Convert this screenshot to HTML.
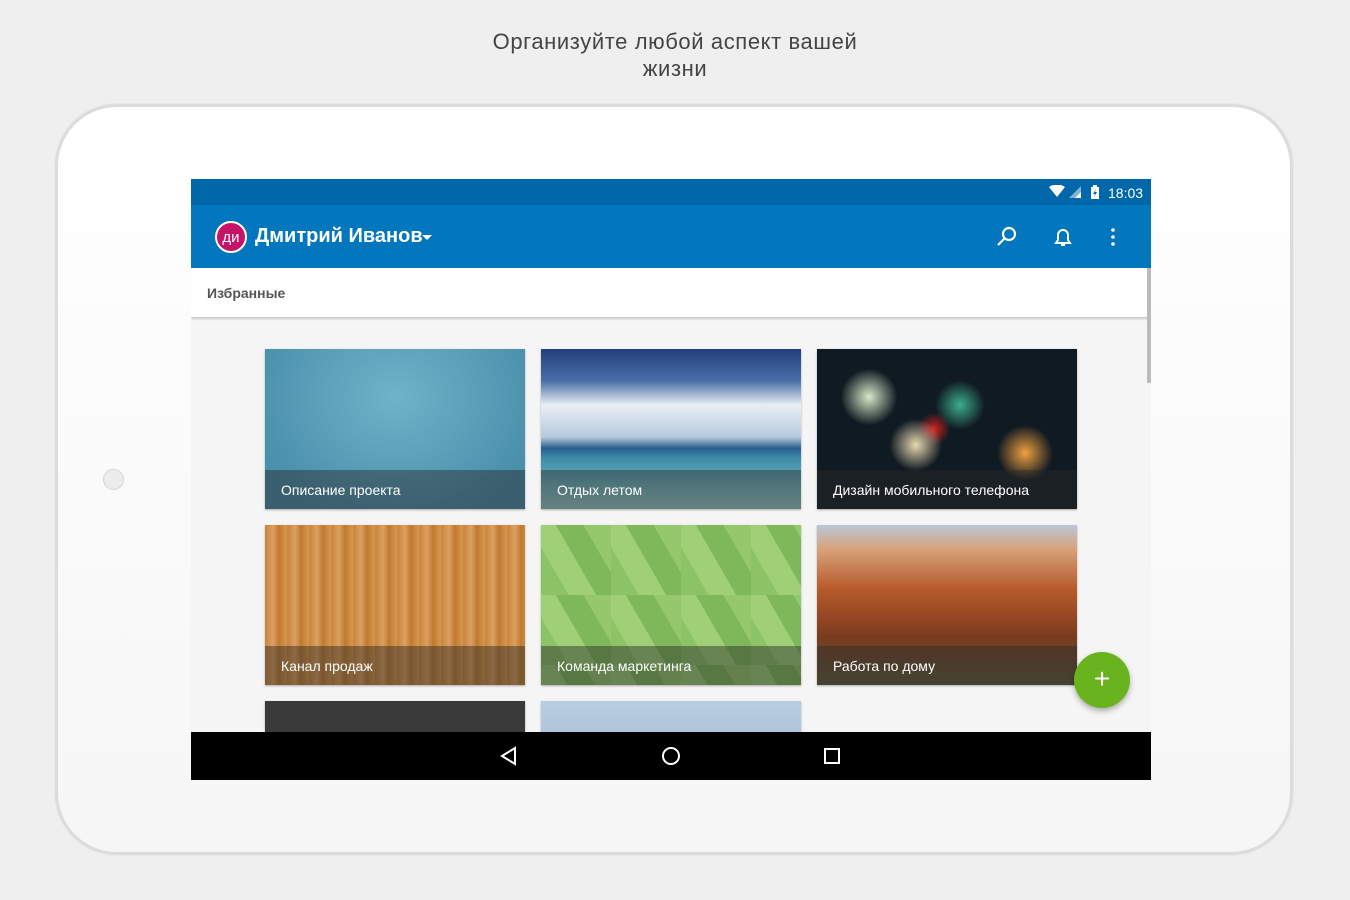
<!DOCTYPE html>
<html><head><meta charset="utf-8"><style>
*{margin:0;padding:0;box-sizing:border-box}
body{width:1350px;height:900px;background:#efefef;font-family:"Liberation Sans",Roboto,sans-serif;position:relative;overflow:hidden}
.title{position:absolute;top:28px;left:0;width:1350px;text-align:center;font-size:22px;line-height:27px;color:#444;letter-spacing:0.6px}
.tab{position:absolute;left:55px;top:104px;width:1238px;height:751px;border-radius:62px;background:linear-gradient(#fff,#f6f6f6);border:3px solid #dcdcdc;box-shadow:0 0 0 1px #e8e8e8}
.cam{position:absolute;left:103px;top:469px;width:21px;height:21px;border-radius:50%;background:#ececec;border:1px solid #d4d4d4}
.scr{position:absolute;left:191px;top:179px;width:960px;height:601px;background:#f5f5f5;overflow:hidden}
.sb{position:absolute;left:0;top:0;width:960px;height:26px;background:#0067a8;color:#fff;font-size:14px}
.tb{position:absolute;left:0;top:26px;width:960px;height:63px;background:#0277be}
.fav{position:absolute;left:0;top:89px;width:960px;height:49px;background:#fff;box-shadow:0 2px 2px rgba(0,0,0,.18);font-size:14px;font-weight:bold;color:#555;padding:17px 16px}
.card{position:absolute;width:260px;height:160px;overflow:hidden;box-shadow:0 1px 2px rgba(0,0,0,.3)}
.lab{position:absolute;left:0;bottom:0;width:100%;height:39px;background:rgba(40,40,40,.45);color:#fff;font-size:14px;padding:12px 16px}
.nav{position:absolute;left:0;top:553px;width:960px;height:48px;background:#000}
</style></head><body>
<div class="title">Организуйте любой аспект вашей<br>жизни</div>
<div class="tab"></div>
<div class="cam"></div>
<div class="scr">
 <div class="sb">
  <svg style="position:absolute;left:858px;top:6px" width="36" height="15"><path d="M0 2 Q8 -3 16 2 L8 12Z" fill="#fff"/><path d="M20 13 L32 1 V13Z" fill="#fff" opacity=".5"/><path d="M26 13 L32 7 V13Z" fill="#fff"/></svg>
  <svg style="position:absolute;left:899px;top:6px" width="10" height="15"><rect x="1" y="2" width="8" height="12" fill="#fff"/><rect x="3" y="0" width="4" height="2" fill="#fff"/><path d="M6 4 L3 9 H5 L4 12 L7 7 H5Z" fill="#0067a8"/></svg>
  <span style="position:absolute;left:917px;top:6px">18:03</span>
 </div>
 <div class="tb">
  <div style="position:absolute;left:24px;top:16px;width:32px;height:32px;border-radius:50%;background:#c5136a;border:2px solid #fff;color:#fff;font-size:15px;text-align:center;line-height:29px">ди</div>
  <div style="position:absolute;left:64px;top:20px;color:#fff;font-size:20px;font-weight:bold">Дмитрий Иванов</div>
  <svg style="position:absolute;left:230px;top:29px" width="12" height="8"><path d="M1 1H11L6 6Z" fill="#fff"/></svg>
  <svg style="position:absolute;left:804px;top:20px" width="24" height="24" fill="none" stroke="#fff" stroke-width="2.2"><circle cx="14" cy="9" r="6"/><path d="M9.5 13.5L3 20"/></svg>
  <svg style="position:absolute;left:860px;top:20px" width="24" height="24" fill="none" stroke="#fff" stroke-width="2"><path d="M5 18H19L17 15V10A5 5 0 0 0 7 10V15Z"/><path d="M10 20H14"/></svg>
  <svg style="position:absolute;left:918px;top:22px" width="8" height="20" fill="#fff"><circle cx="4" cy="3" r="1.8"/><circle cx="4" cy="10" r="1.8"/><circle cx="4" cy="17" r="1.8"/></svg>
 </div>
 <div class="fav">Избранные</div>
 <div style="position:absolute;left:956px;top:89px;width:4px;height:115px;background:#bbb"></div>
 <div class="card" style="left:74px;top:170px;background:radial-gradient(ellipse at 50% 30%,#6fb3c9,#4a8fab 80%)"><div class="lab">Описание проекта</div></div>
 <div class="card" style="left:350px;top:170px;background:linear-gradient(#243f7a 0%,#4a6fa8 20%,#e8eef5 35%,#b7c9de 55%,#2a5f8e 62%,#3d8aa8 68%,#6fb5bf 85%,#9ccbc9 100%)"><div class="lab">Отдых летом</div></div>
 <div class="card" style="left:626px;top:170px;background:radial-gradient(circle at 20% 30%,#d8e8c8 0,transparent 12%),radial-gradient(circle at 38% 60%,#e8d8b0 0,transparent 14%),radial-gradient(circle at 45% 50%,#d02020 0,transparent 10%),radial-gradient(circle at 55% 35%,#3bb08a 0,transparent 14%),radial-gradient(circle at 80% 65%,#f0a040 0,transparent 12%),#101a22"><div class="lab">Дизайн мобильного телефона</div></div>
 <div class="card" style="left:74px;top:346px;background:repeating-linear-gradient(90deg,#c8843a 0,#dca060 8px,#c07a30 14px,#d89850 22px)"><div class="lab">Канал продаж</div></div>
 <div class="card" style="left:350px;top:346px;background:linear-gradient(60deg,#8bc366 25%,#9fd077 25%,#9fd077 50%,#7fb85a 50%,#7fb85a 75%,#95c86c 75%);background-size:70px 70px"><div class="lab">Команда маркетинга</div></div>
 <div class="card" style="left:626px;top:346px;background:linear-gradient(#b9c7d6 0%,#d8a27a 15%,#b75a2a 40%,#7a3a1e 70%,#5c5a3e 100%)"><div class="lab">Работа по дому</div></div>
 <div class="card" style="left:74px;top:522px;background:#3a3a3a"></div>
 <div class="card" style="left:350px;top:522px;background:linear-gradient(#b8cde0,#90a8c0)"></div>
 <div class="nav">
  <svg style="position:absolute;left:308px;top:14px" width="20" height="20" fill="none" stroke="#fff" stroke-width="2"><path d="M16 2V18L3 10Z"/></svg>
  <svg style="position:absolute;left:470px;top:14px" width="20" height="20" fill="none" stroke="#fff" stroke-width="2"><circle cx="10" cy="10" r="8"/></svg>
  <svg style="position:absolute;left:632px;top:15px" width="18" height="18" fill="none" stroke="#fff" stroke-width="2"><rect x="2" y="2" width="14" height="14"/></svg>
 </div>
</div>
<div style="position:absolute;left:1074px;top:652px;width:56px;height:56px;border-radius:50%;background:#69b41e;box-shadow:0 3px 6px rgba(0,0,0,.3);color:#fff;font-size:28px;text-align:center;line-height:54px">+</div>
</body></html>
